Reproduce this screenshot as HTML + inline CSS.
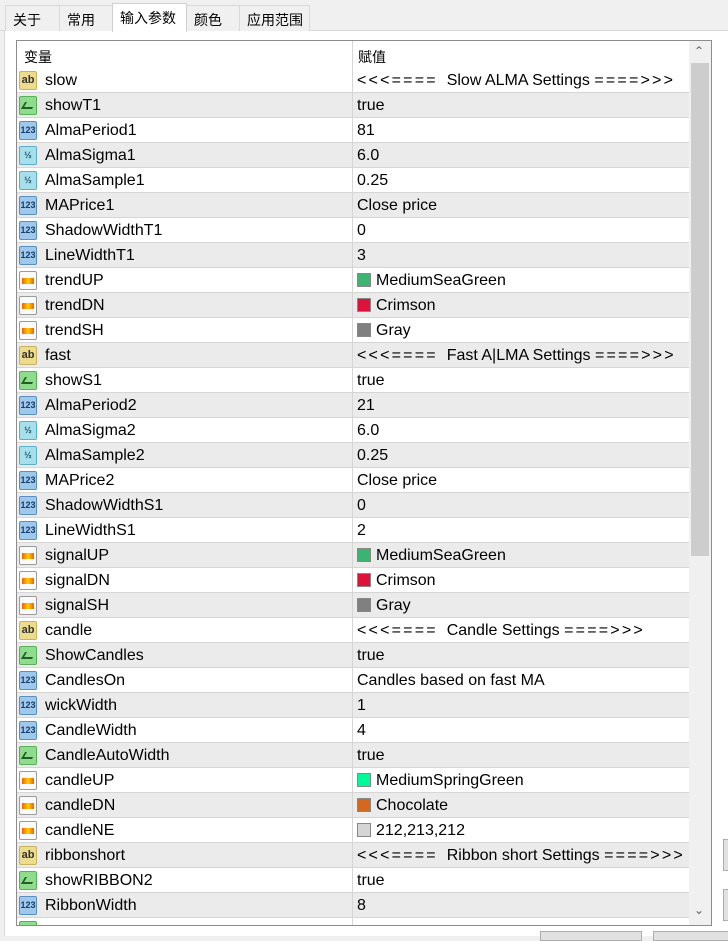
<!DOCTYPE html>
<html><head><meta charset="utf-8">
<style>
*{margin:0;padding:0;box-sizing:border-box}
body{width:728px;height:936px;background:#f0f0f0;font-family:"Liberation Sans","Noto Sans CJK SC",sans-serif;position:relative;overflow:hidden;color:#000}
.tabs{position:absolute;left:0;top:0;width:728px;height:31px;border-bottom:1px solid #d9d9d9}
.tab{position:absolute;top:5px;height:26px;border:1px solid #d9d9d9;border-bottom:none;background:#f0f0f0;font-size:14px;padding:4px 0 0 7px}
.tab.sel{top:3px;height:29px;background:#fff;border-color:#d0d0d0;z-index:2}
.panel{position:absolute;left:4px;top:31px;width:724px;height:905px;background:#fff;border-left:1px solid #d9d9d9}
.list{position:absolute;left:16px;top:40px;width:696px;height:886px;border:1px solid #8c8c8c;background:#fff;overflow:hidden}
.hdr{position:absolute;left:0;top:0;width:672px;height:27px;font-size:14px}
.hdr span{position:absolute;top:6px}
.row{position:absolute;left:0;width:672px;height:25px;border-bottom:1px solid #d6d6d6;font-size:16px}
.row.g{background:#ebebeb}
.row .n{position:absolute;left:28px;top:4px}
.row .v{position:absolute;left:340px;top:4px;white-space:pre}
.s{letter-spacing:2.2px}
.div{position:absolute;left:335px;top:0;width:1px;height:886px;background:#d6d6d6}
.ic{position:absolute;left:2px;top:3px;width:18px;height:19px;border-radius:2px;font-size:9px;font-weight:bold;text-align:center;line-height:17px}
.ab{background:#ecdc8c;border:1px solid #c8b460;color:#333;font-size:11px}
.bo{background:#8fdc8f;border:1px solid #58b058}
.bo:after{content:"";position:absolute;left:3px;top:5px;width:9px;height:5px;border-left:2px solid #206020;border-bottom:2px solid #206020;transform:skewX(-30deg)}
.nu{background:#9ec8ec;border:1px solid #5a90c0;color:#1a3d6a}
.fl{background:#a6e0ec;border:1px solid #5ab0c8;color:#1a4d6a}
.co{background:#fafafa;border:1px solid #9a9a9a}
.co:after{content:"";position:absolute;left:2px;top:6px;width:12px;height:6px;background:linear-gradient(90deg,#f06000,#ffd000,#f06000)}
.sw{display:inline-block;width:14px;height:14px;vertical-align:-2px;margin-right:5px;border:1px solid #888}
.sb{position:absolute;left:672px;top:0;width:22px;height:884px;background:#f0f0f0}
.th{position:absolute;left:2px;top:22px;width:18px;height:493px;background:#cdcdcd}
.ar{position:absolute;left:5px;font-size:12px;color:#606060}
.btn{position:absolute;border:1px solid #adadad;background:#e1e1e1}
</style></head><body>
<div class="tabs">
<div class="tab" style="left:5px;width:55px">关于</div>
<div class="tab" style="left:59px;width:55px">常用</div>
<div class="tab sel" style="left:112px;width:75px">输入参数</div>
<div class="tab" style="left:186px;width:54px">颜色</div>
<div class="tab" style="left:239px;width:71px">应用范围</div>
</div>
<div class="panel"></div>
<div class="list">
<div class="hdr"><span style="left:7px">变量</span><span style="left:341px">赋值</span></div>
<div class="row" style="top:27px"><div class="ic ab">ab</div><span class="n">slow</span><span class="v"><span class="s">&lt;&lt;&lt;====</span>  Slow ALMA Settings <span class="s">====&gt;&gt;&gt;</span></span></div>
<div class="row g" style="top:52px"><div class="ic bo"></div><span class="n">showT1</span><span class="v">true</span></div>
<div class="row" style="top:77px"><div class="ic nu">123</div><span class="n">AlmaPeriod1</span><span class="v">81</span></div>
<div class="row g" style="top:102px"><div class="ic fl">½</div><span class="n">AlmaSigma1</span><span class="v">6.0</span></div>
<div class="row" style="top:127px"><div class="ic fl">½</div><span class="n">AlmaSample1</span><span class="v">0.25</span></div>
<div class="row g" style="top:152px"><div class="ic nu">123</div><span class="n">MAPrice1</span><span class="v">Close price</span></div>
<div class="row" style="top:177px"><div class="ic nu">123</div><span class="n">ShadowWidthT1</span><span class="v">0</span></div>
<div class="row g" style="top:202px"><div class="ic nu">123</div><span class="n">LineWidthT1</span><span class="v">3</span></div>
<div class="row" style="top:227px"><div class="ic co"></div><span class="n">trendUP</span><span class="v"><i class="sw" style="background:#3cb371"></i>MediumSeaGreen</span></div>
<div class="row g" style="top:252px"><div class="ic co"></div><span class="n">trendDN</span><span class="v"><i class="sw" style="background:#dc143c"></i>Crimson</span></div>
<div class="row" style="top:277px"><div class="ic co"></div><span class="n">trendSH</span><span class="v"><i class="sw" style="background:#808080"></i>Gray</span></div>
<div class="row g" style="top:302px"><div class="ic ab">ab</div><span class="n">fast</span><span class="v"><span class="s">&lt;&lt;&lt;====</span>  Fast A|LMA Settings <span class="s">====&gt;&gt;&gt;</span></span></div>
<div class="row" style="top:327px"><div class="ic bo"></div><span class="n">showS1</span><span class="v">true</span></div>
<div class="row g" style="top:352px"><div class="ic nu">123</div><span class="n">AlmaPeriod2</span><span class="v">21</span></div>
<div class="row" style="top:377px"><div class="ic fl">½</div><span class="n">AlmaSigma2</span><span class="v">6.0</span></div>
<div class="row g" style="top:402px"><div class="ic fl">½</div><span class="n">AlmaSample2</span><span class="v">0.25</span></div>
<div class="row" style="top:427px"><div class="ic nu">123</div><span class="n">MAPrice2</span><span class="v">Close price</span></div>
<div class="row g" style="top:452px"><div class="ic nu">123</div><span class="n">ShadowWidthS1</span><span class="v">0</span></div>
<div class="row" style="top:477px"><div class="ic nu">123</div><span class="n">LineWidthS1</span><span class="v">2</span></div>
<div class="row g" style="top:502px"><div class="ic co"></div><span class="n">signalUP</span><span class="v"><i class="sw" style="background:#3cb371"></i>MediumSeaGreen</span></div>
<div class="row" style="top:527px"><div class="ic co"></div><span class="n">signalDN</span><span class="v"><i class="sw" style="background:#dc143c"></i>Crimson</span></div>
<div class="row g" style="top:552px"><div class="ic co"></div><span class="n">signalSH</span><span class="v"><i class="sw" style="background:#808080"></i>Gray</span></div>
<div class="row" style="top:577px"><div class="ic ab">ab</div><span class="n">candle</span><span class="v"><span class="s">&lt;&lt;&lt;====</span>  Candle Settings <span class="s">====&gt;&gt;&gt;</span></span></div>
<div class="row g" style="top:602px"><div class="ic bo"></div><span class="n">ShowCandles</span><span class="v">true</span></div>
<div class="row" style="top:627px"><div class="ic nu">123</div><span class="n">CandlesOn</span><span class="v">Candles based on fast MA</span></div>
<div class="row g" style="top:652px"><div class="ic nu">123</div><span class="n">wickWidth</span><span class="v">1</span></div>
<div class="row" style="top:677px"><div class="ic nu">123</div><span class="n">CandleWidth</span><span class="v">4</span></div>
<div class="row g" style="top:702px"><div class="ic bo"></div><span class="n">CandleAutoWidth</span><span class="v">true</span></div>
<div class="row" style="top:727px"><div class="ic co"></div><span class="n">candleUP</span><span class="v"><i class="sw" style="background:#00fa9a"></i>MediumSpringGreen</span></div>
<div class="row g" style="top:752px"><div class="ic co"></div><span class="n">candleDN</span><span class="v"><i class="sw" style="background:#d2691e"></i>Chocolate</span></div>
<div class="row" style="top:777px"><div class="ic co"></div><span class="n">candleNE</span><span class="v"><i class="sw" style="background:#d4d5d4"></i>212,213,212</span></div>
<div class="row g" style="top:802px"><div class="ic ab">ab</div><span class="n">ribbonshort</span><span class="v"><span class="s">&lt;&lt;&lt;====</span>  Ribbon short Settings <span class="s">====&gt;&gt;&gt;</span></span></div>
<div class="row" style="top:827px"><div class="ic bo"></div><span class="n">showRIBBON2</span><span class="v">true</span></div>
<div class="row g" style="top:852px"><div class="ic nu">123</div><span class="n">RibbonWidth</span><span class="v">8</span></div>
<div class="row" style="top:877px"><div class="ic bo"></div></div>
<div class="div"></div>
<div class="sb"><div class="th"></div><span class="ar" style="top:3px">&#8963;</span><span class="ar" style="top:862px">&#8964;</span></div>
</div>
<div class="btn" style="left:723px;top:839px;width:10px;height:32px"></div>
<div class="btn" style="left:723px;top:889px;width:10px;height:32px"></div>
<div class="btn" style="left:540px;top:931px;width:102px;height:10px"></div>
<div class="btn" style="left:653px;top:931px;width:80px;height:10px"></div>
</body></html>
